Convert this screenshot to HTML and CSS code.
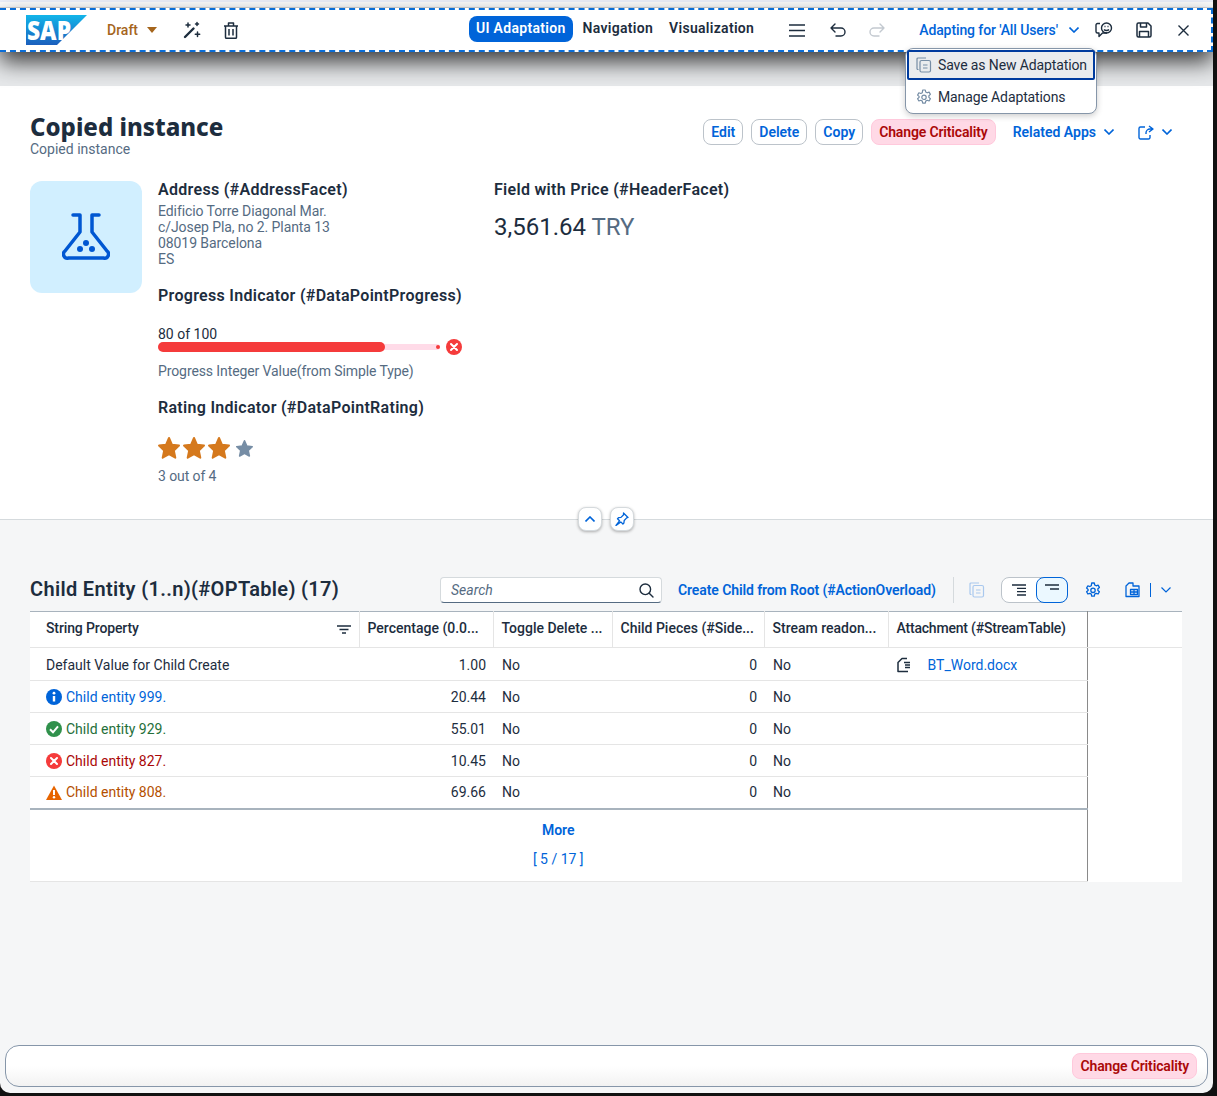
FILE: index.html
```html
<!DOCTYPE html>
<html lang="en">
<head>
  <meta charset="UTF-8">
  <title>Copied instance</title>
  <link rel="stylesheet" href="styles.css">
</head>
<body>
<div class="app">
  <div class="topline"></div>

  <div class="toolbar">
    <svg class="logo" width="62" height="36" viewBox="0 0 62 36">
      <defs>
        <linearGradient id="sapBlue" x1="0" y1="0" x2="0" y2="1">
          <stop offset="0" stop-color="#12b5ea"/>
          <stop offset="1" stop-color="#1b5fbd"/>
        </linearGradient>
      </defs>
      <polygon points="0,3 61,3 31,33 0,33" fill="url(#sapBlue)"/>
      <text x="1" y="28" class="logo-text" textLength="44" lengthAdjust="spacingAndGlyphs">SAP</text>
    </svg>
    <span class="draft">Draft</span>
    <svg class="draft-caret" width="10" height="6" viewBox="0 0 10 6"><polygon points="0,0 10,0 5,6" fill="#a5651c"/></svg>
    <svg class="tool wand" width="18" height="18" viewBox="0 0 18 18" fill="none" stroke="#1d2d3e" stroke-width="1.5" stroke-linecap="round">
      <path d="M2 16 10.500 7.500" stroke-width="2.400"/>
      <path d="M5 2v4M3 4h4M14 1.500v3M12.500 3h3M14.500 11v4.500M12.300 13.200h4.400"/>
    </svg>
    <svg class="tool trash" width="14" height="17" viewBox="0 0 14 17" fill="none" stroke="#1d2d3e" stroke-width="1.500" stroke-linejoin="round">
      <path d="M0 4h14M4.500 4V1h5v3M1.500 4v11.300a1 1 0 0 0 1 1h9a1 1 0 0 0 1-1V4M5 7v6.500M9 7v6.500"/>
    </svg>

    <span class="tab tab-active">UI Adaptation</span>
    <span class="tab tab-nav">Navigation</span>
    <span class="tab tab-vis">Visualization</span>

    <svg class="tool burger" width="16" height="13" viewBox="0 0 16 13" stroke="#1d2d3e" stroke-width="1.400"><path d="M0 1h16M0 6.500h16M0 12h16"/></svg>
    <svg class="tool undo" width="16" height="14" viewBox="0 0 16 14" fill="none" stroke="#1d2d3e" stroke-width="1.400" stroke-linecap="round" stroke-linejoin="round"><path d="M5 1 1 5l4 4M1 5h10a4 4 0 0 1 0 8H6"/></svg>
    <svg class="tool redo" width="16" height="14" viewBox="0 0 16 14" fill="none" stroke="#c3c9d0" stroke-width="1.400" stroke-linecap="round" stroke-linejoin="round"><path d="M11 1l4 4-4 4M15 5H5a4 4 0 0 0 0 8h5"/></svg>

    <span class="adapting">Adapting for 'All Users'</span>
    <svg class="chev-adapt" width="10" height="6" viewBox="0 0 10 6" fill="none" stroke="#0064d9" stroke-width="1.600"><path d="M.5.500 5 5 9.500.5"/></svg>
    <svg class="tool feedback" width="18" height="16" viewBox="0 0 18 16" fill="none" stroke="#1d2d3e" stroke-width="1.400" stroke-linejoin="round">
      <path d="M5 1.500H2.500A1.500 1.500 0 0 0 1 3v6.500A1.500 1.500 0 0 0 2.500 11H4v3.500L7.500 11H12"/>
      <circle cx="11.500" cy="6" r="5"/>
      <path d="M9 7.500c1.200 1.400 3.800 1.400 5 0M9.500 4.500h1M12.500 4.500h1"/>
    </svg>
    <svg class="tool save" width="16" height="16" viewBox="0 0 16 16" fill="none" stroke="#1d2d3e" stroke-width="1.500" stroke-linejoin="round">
      <path d="M1 2.500A1.500 1.500 0 0 1 2.500 1H12l3 3v9.500a1.500 1.500 0 0 1-1.500 1.500h-11A1.500 1.500 0 0 1 1 13.500zM4.500 1v4h6V1M3.500 15V9.500h9V15"/>
    </svg>
    <svg class="tool close" width="11" height="11" viewBox="0 0 11 11" stroke="#1d2d3e" stroke-width="1.400"><path d="M.5.500l10 10M10.500.500l-10 10"/></svg>
  </div>
  <div class="toolbar-band"></div>

  <div class="adapt-menu">
    <div class="adapt-item adapt-item-focus">
      <svg width="16" height="16" viewBox="0 0 16 16" fill="none" stroke="#768da5" stroke-width="1.200"><path d="M2.500 12.500H2a1 1 0 0 1-1-1V2a1 1 0 0 1 1-1h8"/><rect x="4" y="3.500" width="10.500" height="11.500" rx="1.500"/><path d="M7 8h4.500M7 11h4.500"/></svg>
      Save as New Adaptation
    </div>
    <div class="adapt-item">
      <svg width="16" height="16" viewBox="0 0 16 16" fill="none" stroke="#768da5" stroke-width="1.200" stroke-linejoin="round"><path d="M6.700 1h2.600l.4 2 1.500.8 1.900-.7 1.300 2.300-1.500 1.300v1.700l1.500 1.300-1.300 2.300-1.900-.7-1.500.8-.4 2H6.700l-.4-2-1.500-.8-1.900.7-1.300-2.300 1.500-1.300V7.400L1.600 6.100l1.300-2.300 1.900.7 1.500-.8z"/><circle cx="8" cy="8.300" r="2.200"/></svg>
      Manage Adaptations
    </div>
  </div>

  <section class="obj-header">
    <div class="title-row">
      <div>
        <h1 class="obj-title">Copied instance</h1>
        <div class="obj-sub">Copied instance</div>
      </div>
      <div class="actions">
        <button class="btn">Edit</button>
        <button class="btn">Delete</button>
        <button class="btn">Copy</button>
        <button class="btn btn-neg">Change Criticality</button>
        <span class="related">Related Apps</span>
        <svg class="chev" width="10" height="6" viewBox="0 0 10 6" fill="none" stroke="#0064d9" stroke-width="1.600"><path d="M.5.500 5 5 9.500.5"/></svg>
        <svg class="share" width="16" height="15" viewBox="0 0 16 15" fill="none" stroke="#0064d9" stroke-width="1.400" stroke-linejoin="round"><path d="M7 2H2.500A1.500 1.500 0 0 0 1 3.500v9A1.500 1.500 0 0 0 2.500 14h8a1.500 1.500 0 0 0 1.500-1.500V10"/><path d="M11 1l4 3-4 3M15 4h-3a4 4 0 0 0-4 4v1"/></svg>
        <svg class="chev chev-share" width="10" height="6" viewBox="0 0 10 6" fill="none" stroke="#0064d9" stroke-width="1.600"><path d="M.5.500 5 5 9.500.5"/></svg>
      </div>
    </div>

    <div class="facets">
      <div class="avatar">
        <svg width="48" height="48" viewBox="0 0 48 48" fill="none" stroke="#0057d2" stroke-width="3.500" stroke-linecap="round" stroke-linejoin="round">
          <path d="M11 2h7v17L3 38a4 4 0 0 0 3.500 7h35a4 4 0 0 0 3.500-7L30 19V2h7"/>
          <circle cx="24" cy="30" r="3" fill="#0057d2" stroke="none"/>
          <circle cx="18" cy="36" r="3" fill="#0057d2" stroke="none"/>
          <circle cx="30" cy="36" r="3" fill="#0057d2" stroke="none"/>
        </svg>
      </div>

      <div class="facet-main">
        <h3 class="facet-title">Address (#AddressFacet)</h3>
        <div class="address">Edificio Torre Diagonal Mar.<br>c/Josep Pla, no 2. Planta 13<br>08019 Barcelona<br>ES</div>

        <h3 class="facet-title progress-title">Progress Indicator (#DataPointProgress)</h3>
        <div class="progress-value">80 of 100</div>
        <div class="progress-row">
          <div class="progress-track">
            <div class="progress-bar" style="width: 80.500%"></div>
            <span class="progress-dot"></span>
          </div>
          <svg class="progress-icon" width="16" height="16" viewBox="0 0 16 16"><circle cx="8" cy="8" r="8" fill="#f53b3b"/><path d="M5 5l6 6M11 5l-6 6" stroke="#fff" stroke-width="2" stroke-linecap="round"/></svg>
        </div>
        <div class="muted progress-caption">Progress Integer Value(from Simple Type)</div>

        <h3 class="facet-title rating-title">Rating Indicator (#DataPointRating)</h3>
        <div class="stars">
          <svg width="22" height="22" viewBox="0 0 22 22"><path class="star-on" d="M11 1l3 6.800 7 .8-5.200 4.900 1.500 7.200L11 17.100l-6.300 3.600 1.500-7.200L1 8.600l7-.8z"/></svg>
          <svg width="22" height="22" viewBox="0 0 22 22"><path class="star-on" d="M11 1l3 6.800 7 .8-5.200 4.900 1.500 7.200L11 17.100l-6.300 3.600 1.500-7.200L1 8.600l7-.8z"/></svg>
          <svg width="22" height="22" viewBox="0 0 22 22"><path class="star-on" d="M11 1l3 6.800 7 .8-5.200 4.900 1.500 7.200L11 17.100l-6.300 3.600 1.500-7.200L1 8.600l7-.8z"/></svg>
          <svg class="star-last" width="17" height="17" viewBox="0 0 22 22"><path class="star-off" d="M11 1l3 6.800 7 .8-5.200 4.900 1.500 7.200L11 17.100l-6.300 3.600 1.500-7.200L1 8.600l7-.8z"/></svg>
        </div>
        <div class="muted rating-caption">3 out of 4</div>
      </div>

      <div class="facet-price">
        <h3 class="facet-title">Field with Price (#HeaderFacet)</h3>
        <div class="price">3,561.64 <span class="currency">TRY</span></div>
      </div>
    </div>

    <div class="header-btns">
      <span class="round-btn">
        <svg width="10" height="6" viewBox="0 0 10 6" fill="none" stroke="#0064d9" stroke-width="1.600"><path d="M.5 5.500 5 1l4.500 4.500"/></svg>
      </span>
      <span class="round-btn">
        <svg width="14" height="14" viewBox="0 0 14 14" fill="none" stroke="#0064d9" stroke-width="1.300" stroke-linejoin="round"><path d="M8.500 1l4.500 4.500-1.300.4-2.500 2.600-.3 2.500-1 1-2.100-2.100L1 13.500l3.500-4.700L2.500 6.700l1-1 2.500-.3 2.600-2.600z"/></svg>
      </span>
    </div>
  </section>

  <main class="content">
    <div class="table-bar">
      <h2 class="table-title">Child Entity (1..n)(#OPTable) (17)</h2>
      <div class="search">
        <span class="search-text">Search</span>
        <svg width="15" height="15" viewBox="0 0 15 15" fill="none" stroke="#1d2d3e" stroke-width="1.400" stroke-linecap="round"><circle cx="6.300" cy="6.300" r="5.300"/><path d="M10.200 10.200 14 14"/></svg>
      </div>
      <span class="create-link">Create Child from Root (#ActionOverload)</span>
      <span class="sep sep-tall"></span>
      <svg class="bar-copy" width="16" height="16" viewBox="0 0 16 16" fill="none" stroke="#a9c8ee" stroke-width="1.200"><path d="M2.500 12.500H2a1 1 0 0 1-1-1V2a1 1 0 0 1 1-1h8"/><rect x="4" y="3.500" width="10.500" height="11.500" rx="1.500"/><path d="M7 8h4.500M7 11h4.500"/></svg>
      <div class="segmented">
        <span class="seg">
          <svg width="14" height="12" viewBox="0 0 14 12" stroke="#1d2d3e" stroke-width="1.300"><path d="M0 1h14M5 4.300h9M5 7.600h9M5 11h9"/></svg>
        </span>
        <span class="seg seg-on">
          <svg width="14" height="6" viewBox="0 0 14 6" stroke="#1d2d3e" stroke-width="1.300"><path d="M0 1h14M5 5h9"/></svg>
        </span>
      </div>
      <svg class="bar-gear" width="16" height="16" viewBox="0 0 16 16" fill="none" stroke="#0064d9" stroke-width="1.300" stroke-linejoin="round"><path d="M6.700 1h2.600l.4 2 1.500.8 1.900-.7 1.300 2.300-1.500 1.300v1.700l1.500 1.300-1.300 2.300-1.900-.7-1.500.8-.4 2H6.700l-.4-2-1.500-.8-1.900.7-1.300-2.300 1.500-1.300V7.400L1.600 6.100l1.300-2.300 1.900.7 1.500-.8z"/><circle cx="8" cy="8.300" r="2.200"/></svg>
      <svg class="bar-export" width="16" height="16" viewBox="0 0 16 16" fill="none" stroke="#0064d9" stroke-width="1.300" stroke-linejoin="round"><path d="M5 1h4v3H15v10.500H2V4z"/><path d="M6.500 7.500h7v5h-7zM10 7.500v5M6.500 10h7"/></svg>
      <span class="sep sep-short"></span>
      <svg class="bar-chev" width="10" height="6" viewBox="0 0 10 6" fill="none" stroke="#0064d9" stroke-width="1.200"><path d="M.5.500 5 5 9.500.5"/></svg>
    </div>

    <table class="grid">
      <colgroup>
        <col class="c1"><col class="c2"><col class="c3"><col class="c4"><col class="c5"><col class="c6"><col>
      </colgroup>
      <thead>
        <tr>
          <th class="th-first">String Property
            <svg class="filter" width="14" height="9" viewBox="0 0 14 9" stroke="#1d2d3e" stroke-width="1.300"><path d="M0 1h14M2.500 4.500h9M5 8h4"/></svg>
          </th>
          <th>Percentage (0.0...</th>
          <th>Toggle Delete ...</th>
          <th>Child Pieces (#Side...</th>
          <th>Stream readon...</th>
          <th class="th-last">Attachment (#StreamTable)</th>
          <th class="filler"></th>
        </tr>
      </thead>
      <tbody>
        <tr class="row-a">
          <td class="first">Default Value for Child Create</td><td class="num">1.00</td><td>No</td><td class="num">0</td><td>No</td>
          <td class="attach">
            <svg width="16" height="16" viewBox="0 0 16 16" fill="none" stroke="#1d2d3e" stroke-width="1.500" stroke-linejoin="round"><path d="M11 1.500H6L2 5.500v9h10M8 5.500h6M9 8h5M9 10.500h5"/></svg>
            <span class="link">BT_Word.docx</span>
          </td>
          <td class="filler"></td>
        </tr>
        <tr class="row-b">
          <td class="first"><span class="state state-info">
            <svg width="16" height="16" viewBox="0 0 16 16"><circle cx="8" cy="8" r="8" fill="#0064d9"/><circle cx="8" cy="4.200" r="1.400" fill="#fff"/><path d="M8 7v5.500" stroke="#fff" stroke-width="2.400"/></svg>
            Child entity 999.</span></td><td class="num">20.44</td><td>No</td><td class="num">0</td><td>No</td><td></td><td class="filler"></td>
        </tr>
        <tr class="row-b">
          <td class="first"><span class="state state-ok">
            <svg width="16" height="16" viewBox="0 0 16 16"><circle cx="8" cy="8" r="8" fill="#30914c"/><path d="M4 8.300l3 3 5-6" fill="none" stroke="#fff" stroke-width="2"/></svg>
            Child entity 929.</span></td><td class="num">55.01</td><td>No</td><td class="num">0</td><td>No</td><td></td><td class="filler"></td>
        </tr>
        <tr class="row-b">
          <td class="first"><span class="state state-err">
            <svg width="16" height="16" viewBox="0 0 16 16"><circle cx="8" cy="8" r="8" fill="#f53b3b"/><path d="M5 5l6 6M11 5l-6 6" stroke="#fff" stroke-width="2" stroke-linecap="round"/></svg>
            Child entity 827.</span></td><td class="num">10.45</td><td>No</td><td class="num">0</td><td>No</td><td></td><td class="filler"></td>
        </tr>
        <tr class="row-b row-end">
          <td class="first"><span class="state state-warn">
            <svg width="16" height="15" viewBox="0 0 16 15"><path d="M8 .500 16 15H0z" fill="#e76500"/><path d="M8 5v5" stroke="#fff" stroke-width="2"/><circle cx="8" cy="12.300" r="1.200" fill="#fff"/></svg>
            Child entity 808.</span></td><td class="num">69.66</td><td>No</td><td class="num">0</td><td>No</td><td></td><td class="filler"></td>
        </tr>
        <tr class="row-more">
          <td colspan="6"><div class="more">More</div><div class="more-count">[ 5 / 17 ]</div></td>
          <td class="filler"></td>
        </tr>
      </tbody>
    </table>

    <footer class="footer-bar">
      <button class="btn btn-neg">Change Criticality</button>
    </footer>
  </main>
</div>
</body>
</html>
```

FILE: styles.css
```css
* {
  box-sizing: border-box;
}
html, body {
  margin: 0;
  height: 100%;
}
body {
  background: #111;
  color: #1d2d3e;
  font-family: Roboto, "Noto Sans", sans-serif;
  font-size: 14px;
  overflow: hidden;
}
.app {
  position: relative;
  width: 1213px;
  height: 1093px;
  background: #f5f6f7;
  border-bottom-right-radius: 10px;
  border-bottom-left-radius: 10px;
  overflow: hidden;
}
.topline {
  height: 8px;
  background: #fff;
  border-top: 2px solid #eef1fb;
  border-bottom: 1px solid #dcdcdc;
}

/* toolbar */
.toolbar {
  position: relative;
  z-index: 2;
  height: 44px;
  display: flex;
  align-items: center;
  background: #fff;
  border: 2px dashed #0a6ed8;
  border-left: 0;
  padding-left: 26px;
  box-shadow: 0 10px 22px rgba(0, 0, 0, .75);
}
.toolbar svg {
  flex: none;
}
.logo-text {
  fill: #fff;
  font: 900 26px "Noto Sans", sans-serif;
}
.draft {
  margin-left: 19px;
  color: #a5651c;
  font-weight: 500;
}
.draft-caret { margin-left: 9px; }
.wand { margin-left: 26px; }
.trash { margin-left: 23px; }
.tab {
  margin-bottom: 4px;
  font-weight: 600;
  letter-spacing: .3px;
  white-space: nowrap;
}
.tab-active {
  margin-left: 231px;
  margin-bottom: 2px;
  height: 26px;
  line-height: 24px;
  padding: 0 7px;
  border-radius: 8px;
  background: #0064d9;
  color: #fff;
}
.tab-nav { margin-left: 10px; }
.tab-vis { margin-left: 16px; }
.burger { margin-left: 35px; }
.undo { margin-left: 25px; }
.redo { margin-left: 23px; }
.adapting {
  margin-left: 34px;
  color: #0064d9;
  font-weight: 500;
  letter-spacing: -.1px;
  white-space: nowrap;
}
.chev-adapt { margin-left: 11px; }
.feedback { margin-left: 16px; }
.save { margin-left: 23px; }
.close { margin-left: 26px; }
.toolbar-band {
  height: 34px;
  background: #e6e8ea;
}

/* menu under the adapting button */
.adapt-menu {
  position: absolute;
  z-index: 3;
  left: 905px;
  top: 48px;
  width: 192px;
  height: 66px;
  padding: 1px;
  background: #fff;
  border: 1px solid #8696a9;
  border-radius: 8px;
  box-shadow: 0 2px 6px rgba(0, 0, 0, .2);
}
.adapt-item {
  display: flex;
  align-items: center;
  gap: 6px;
  height: 33px;
  padding-left: 9px;
  letter-spacing: -.12px;
  white-space: nowrap;
}
.adapt-item-focus {
  height: 30px;
  padding-left: 7px;
  padding-bottom: 1px;
  background: #eaecee;
  border: 2px solid #003b9e;
  border-radius: 2px;
}

/* object header */
.obj-header {
  position: relative;
  height: 434px;
  padding: 27px 0 0 30px;
  background: #fff;
  border-bottom: 1px solid #d5dadd;
}
.title-row {
  display: flex;
  justify-content: space-between;
}
.obj-title {
  margin: 0;
  font-family: "Noto Sans", sans-serif;
  font-size: 24px;
  font-weight: 800;
  line-height: 28px;
}
.obj-sub {
  color: #556b82;
  line-height: 16px;
}
.actions {
  display: flex;
  align-items: center;
  height: 26px;
  margin-top: 6px;
  padding-right: 41px;
}
.btn {
  height: 26px;
  margin-right: 8px;
  padding: 0 7px;
  background: #fff;
  border: 1px solid #bcc3ca;
  border-radius: 8px;
  color: #0064d9;
  font: 600 14px Roboto, sans-serif;
  white-space: nowrap;
}
.btn-neg {
  background: #ffd9e6;
  border-color: #ffc9dc;
  color: #aa0808;
  letter-spacing: -.15px;
}
.related {
  margin-left: 9px;
  color: #0064d9;
  font-weight: 600;
  white-space: nowrap;
}
.chev { margin-left: 8px; flex: none; }
.share { margin-left: 24px; flex: none; }
.chev-share { margin-left: 8px; }

.facets {
  display: flex;
  margin-top: 24px;
}
.avatar {
  display: flex;
  align-items: center;
  justify-content: center;
  flex: none;
  width: 112px;
  height: 112px;
  border-radius: 12px;
  background: #d1efff;
}
.facet-main {
  width: 336px;
  margin-left: 16px;
}
.facet-title {
  margin: 0;
  font-size: 16px;
  font-weight: 600;
  letter-spacing: .3px;
  line-height: 18px;
}
.address {
  margin-top: 4px;
  color: #556b82;
  letter-spacing: -.08px;
  line-height: 16px;
}
.progress-title { margin-top: 20px; }
.progress-value {
  margin-top: 21px;
  line-height: 16px;
}
.progress-row {
  display: flex;
  align-items: center;
  margin-top: -3px;
  height: 16px;
}
.progress-track {
  position: relative;
  width: 282px;
  height: 6px;
  background: #ffdbe8;
  border-radius: 3px;
}
.progress-bar {
  position: absolute;
  top: -2px;
  left: 0;
  height: 10px;
  background: #f53b3b;
  border-radius: 5px;
}
.progress-dot {
  position: absolute;
  right: 0;
  top: 1px;
  width: 4px;
  height: 4px;
  border-radius: 50%;
  background: #f53b3b;
}
.progress-icon { margin-left: 6px; }
.muted {
  color: #556b82;
  letter-spacing: -.1px;
  line-height: 16px;
}
.progress-caption { margin-top: 8px; }
.rating-title { margin-top: 20px; }
.stars {
  display: flex;
  align-items: center;
  gap: 3px;
  margin-top: 20px;
  height: 22px;
}
.stars svg { overflow: visible; }
.star-last { margin-left: 3px; }
.star-on, .star-off {
  stroke-width: 2;
  stroke-linejoin: round;
}
.star-on { fill: #d5791d; stroke: #d5791d; }
.star-off { fill: #768da5; stroke: #768da5; }
.rating-caption { margin-top: 9px; }
.price {
  margin-top: 13px;
  font-size: 24px;
  line-height: 30px;
}
.currency {
  color: #556b82;
}
.header-btns {
  position: absolute;
  left: 578px;
  bottom: -12px;
  z-index: 1;
  display: flex;
  gap: 8px;
}
.round-btn {
  display: flex;
  align-items: center;
  justify-content: center;
  width: 24px;
  height: 24px;
  background: #fff;
  border: 1px solid #d5dadd;
  border-radius: 8px;
  box-shadow: 0 1px 3px rgba(0, 0, 0, .3);
}

/* table */
.content {
  padding: 0 0 0 30px;
}
.table-bar {
  display: flex;
  align-items: center;
  height: 28px;
  margin-top: 56px;
  margin-bottom: 7px;
}
.table-title {
  width: 410px;
  margin: 0;
  padding-bottom: 2px;
  font-size: 20px;
  font-weight: 600;
  letter-spacing: .33px;
  line-height: 24px;
  white-space: nowrap;
}
.search {
  display: flex;
  align-items: center;
  justify-content: space-between;
  width: 222px;
  height: 26px;
  padding: 0 7px 0 10px;
  background: #fff;
  border: 1px solid #d5dadd;
  border-bottom-color: #556b82;
  border-radius: 4px;
}
.search-text {
  color: #556b82;
  font-style: italic;
}
.create-link {
  margin-left: 16px;
  color: #0064d9;
  font-weight: 600;
  letter-spacing: -.1px;
  white-space: nowrap;
}
.sep {
  display: block;
  flex: none;
  width: 1px;
  background: #d5dadd;
}
.sep-tall {
  height: 26px;
  margin-left: 17px;
}
.bar-copy { margin-left: 15px; }
.segmented {
  display: flex;
  width: 67px;
  height: 26px;
  margin-left: 16px;
  background: #fff;
  border: 1px solid #bcc3ca;
  border-radius: 8px;
}
.seg {
  display: flex;
  align-items: center;
  justify-content: center;
  width: 35px;
  height: 100%;
}
.seg-on {
  flex: none;
  width: 32px;
  height: 26px;
  margin: -1px -1px -1px 0;
  background: #ebf8ff;
  border: 1px solid #0064d9;
  border-radius: 8px;
  align-items: flex-start;
  padding-top: 6px;
}
.bar-gear { margin-left: 17px; }
.bar-export { margin-left: 23px; }
.sep-short {
  height: 14px;
  margin-left: 10px;
  background: #0064d9;
}
.bar-chev { margin-left: 10px; }

.grid {
  width: 1152px;
  table-layout: fixed;
  border-collapse: collapse;
  background: #fff;
  border-top: 1px solid #a8b3bd;
}
.c1 { width: 329px; }
.c2 { width: 134px; }
.c3 { width: 119px; }
.c4 { width: 152px; }
.c5 { width: 124px; }
.c6 { width: 199px; }
.grid th {
  position: relative;
  height: 36px;
  padding: 0 8px 3px;
  border-right: 1px solid #e5e5e5;
  border-bottom: 1px solid #e5e5e5;
  font-size: 14px;
  font-weight: 500;
  text-align: left;
  white-space: nowrap;
  overflow: hidden;
}
.grid th.th-first {
  padding-left: 16px;
  letter-spacing: -.13px;
}
.grid th.th-last {
  border-right: 1px solid #8a8a8a;
  letter-spacing: -.2px;
}
.grid th.filler { border-right: 0; }
.filter {
  position: absolute;
  right: 8px;
  top: 13px;
}
.grid td {
  padding: 0 7px 0 9px;
  border-bottom: 1px solid #e5e5e5;
  white-space: nowrap;
}
.grid td.first { padding-left: 16px; }
.grid td.num { text-align: right; }
.grid td.filler {
  border-bottom: 0;
  border-left: 1px solid #8a8a8a;
}
.row-a td {
  height: 33px;
  padding-top: 1px;
}
.row-b td { height: 32px; }
.row-end td { border-bottom: 2px solid #a8b3bd; }
.state {
  display: flex;
  align-items: center;
  gap: 4px;
}
.state svg { flex: none; }
.state-info { color: #0064d9; }
.state-ok { color: #256f3a; }
.state-err { color: #aa0808; }
.state-warn { color: #b44f00; }
.attach svg {
  margin-left: -1px;
  vertical-align: -3px;
}
.link {
  margin-left: 12px;
  color: #0064d9;
}
.grid .row-more td {
  height: 73px;
  padding: 0 8px 2px;
  text-align: center;
}
.more {
  color: #0064d9;
  font-weight: 600;
  line-height: 20px;
}
.more-count {
  margin-top: 10px;
  color: #0064d9;
  line-height: 18px;
}
.footer-bar {
  position: absolute;
  left: 5px;
  top: 1045px;
  display: flex;
  align-items: center;
  justify-content: flex-end;
  width: 1203px;
  height: 42px;
  padding-right: 2px;
  background: linear-gradient(#fff 50%, #f2f2f2);
  border: 1px solid #8696a9;
  border-radius: 14px;
}
```
